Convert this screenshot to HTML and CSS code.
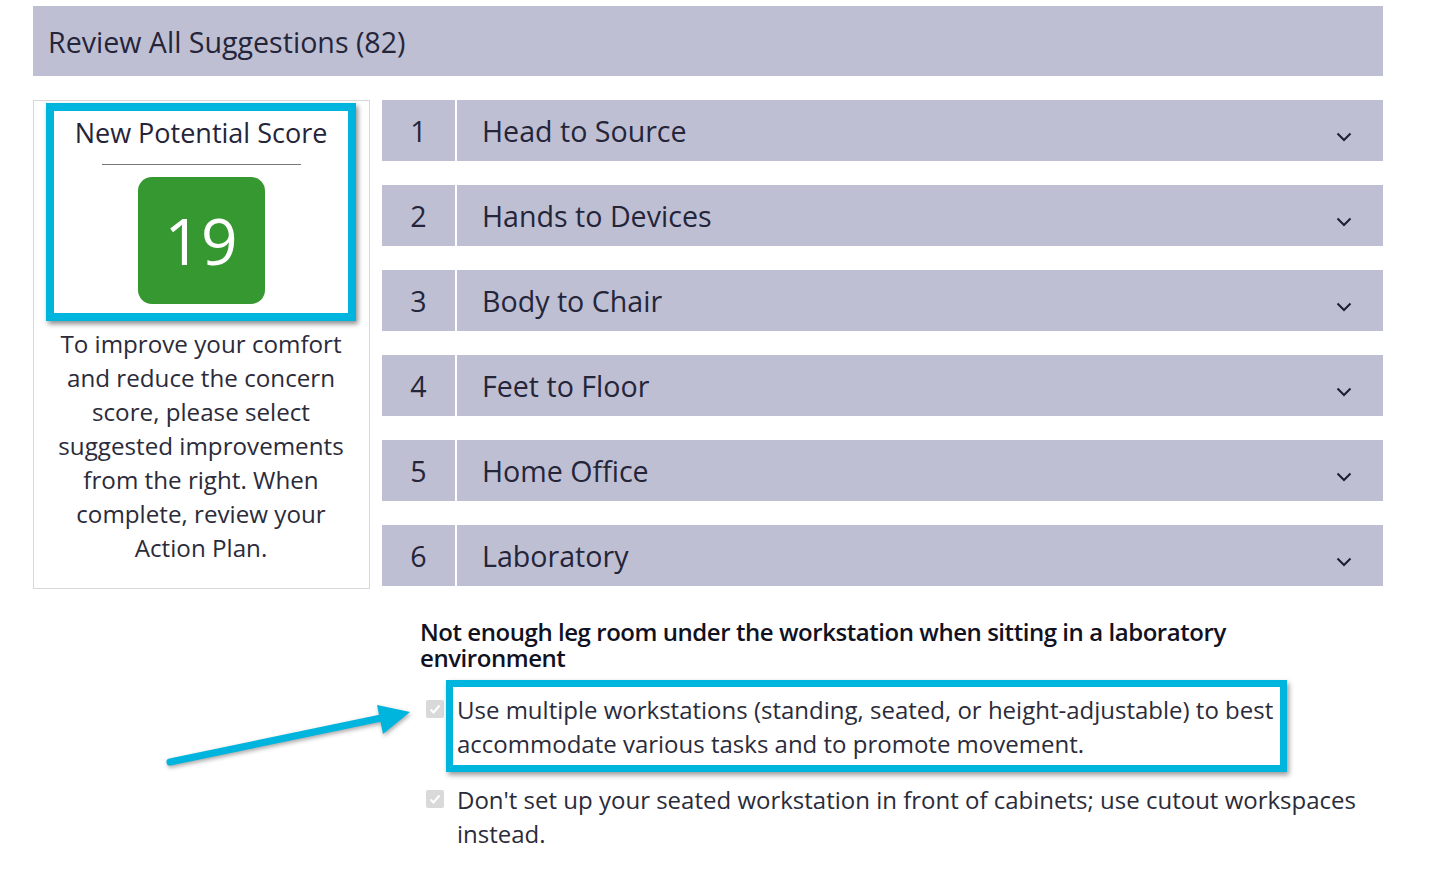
FILE: index.html
```html
<!DOCTYPE html>
<html lang="en">
<head>
	<meta charset="UTF-8">
	<title>Review All Suggestions</title>
	<link rel="stylesheet" href="styles.css">
</head>
<body>
	<div class="page">
		<div class="topbar">Review All Suggestions (82)</div>
		<div class="main">
			<div class="scorecard">
				<div class="scorebox">
					<div class="scoretitle">New Potential Score</div>
					<div class="divider"></div>
					<div class="score">19</div>
				</div>
				<p class="hint">To improve your comfort and reduce the concern score, please select suggested improvements from the right. When complete, review your Action Plan.</p>
			</div>
			<div class="right">
				<div class="acc">
					<div class="num">1</div>
					<div class="title">Head to Source</div>
					<svg class="chev" width="16" height="10" viewBox="0 0 16 10"><polyline points="1.5,1.5 8,8 14.5,1.5"/></svg>
				</div>
				<div class="acc">
					<div class="num">2</div>
					<div class="title">Hands to Devices</div>
					<svg class="chev" width="16" height="10" viewBox="0 0 16 10"><polyline points="1.5,1.5 8,8 14.5,1.5"/></svg>
				</div>
				<div class="acc">
					<div class="num">3</div>
					<div class="title">Body to Chair</div>
					<svg class="chev" width="16" height="10" viewBox="0 0 16 10"><polyline points="1.5,1.5 8,8 14.5,1.5"/></svg>
				</div>
				<div class="acc">
					<div class="num">4</div>
					<div class="title">Feet to Floor</div>
					<svg class="chev" width="16" height="10" viewBox="0 0 16 10"><polyline points="1.5,1.5 8,8 14.5,1.5"/></svg>
				</div>
				<div class="acc">
					<div class="num">5</div>
					<div class="title">Home Office</div>
					<svg class="chev" width="16" height="10" viewBox="0 0 16 10"><polyline points="1.5,1.5 8,8 14.5,1.5"/></svg>
				</div>
				<div class="acc">
					<div class="num">6</div>
					<div class="title">Laboratory</div>
					<svg class="chev" width="16" height="10" viewBox="0 0 16 10"><polyline points="1.5,1.5 8,8 14.5,1.5"/></svg>
				</div>

				<div class="issue">
					<h3>Not enough leg room under the workstation when sitting in a laboratory environment</h3>
					<div class="item">
						<span class="check"><svg width="18" height="18" viewBox="0 0 18 18"><polyline points="4.5,9.5 7.5,12.5 13.5,5.5"/></svg></span>
						<span class="itemtext">Use multiple workstations (standing, seated, or height-adjustable) to best accommodate various tasks and to promote movement.</span>
						<div class="mark"></div>
					</div>
					<div class="item">
						<span class="check"><svg width="18" height="18" viewBox="0 0 18 18"><polyline points="4.5,9.5 7.5,12.5 13.5,5.5"/></svg></span>
						<span class="itemtext">Don't set up your seated workstation in front of cabinets; use cutout workspaces instead.</span>
					</div>
				</div>
			</div>
		</div>
		<svg class="arrow" width="270" height="80" viewBox="0 0 270 80">
			<line x1="10" y1="67" x2="226" y2="22"/>
			<polygon points="250,17 217,10 223,39"/>
		</svg>
	</div>
</body>
</html>
```
FILE: styles.css
```css
*{
	box-sizing: border-box;
}
body{
	margin: 0;
	background: #fff;
	font-family: "Open Sans", "Liberation Sans", sans-serif;
	color: #25253a;
}
.page{
	position: relative;
	padding: 6px 0 0 33px;
	width: 1383px;
}
.topbar{
	height: 70px;
	background: #bebfd3;
	display: flex;
	align-items: center;
	padding-left: 15px;
	font-size: 28.6px;
}
.main{
	display: flex;
	margin-top: 24px;
	gap: 12px;
	align-items: flex-start;
}
.scorecard{
	width: 337px;
	flex: none;
	border: 1px solid #d8d8d8;
	padding: 2px 13px 23px 12px;
}
.scorebox{
	border: 8px solid #00b5dd;
	box-shadow: 2px 3px 5px rgba(0,0,0,0.45);
	display: flex;
	flex-direction: column;
	align-items: center;
	padding: 5px 0 9px;
}
.scoretitle{
	font-size: 27px;
	line-height: 34px;
}
.divider{
	width: 199px;
	height: 1px;
	background: #777;
	margin: 14px 0 12px;
}
.score{
	width: 127px;
	height: 127px;
	border-radius: 14px;
	background: #359830;
	color: #fff;
	font-size: 64px;
	display: flex;
	align-items: center;
	justify-content: center;
}
.hint{
	margin: 6px -4px 0;
	padding: 0;
	text-align: center;
	font-size: 24.2px;
	line-height: 34px;
	color: #2b2b3a;
}
.right{
	flex: 1;
}
.acc{
	height: 61px;
	background: #bebfd3;
	display: flex;
	align-items: center;
	margin-bottom: 24px;
	font-size: 28.6px;
}
.num{
	width: 75px;
	height: 100%;
	border-right: 2px solid #fff;
	display: flex;
	align-items: center;
	justify-content: center;
}
.title{
	flex: 1;
	padding-left: 25px;
}
.chev{
	margin: 12px 31px 0 0;
}
.chev polyline{
	fill: none;
	stroke: #1e1e30;
	stroke-width: 2;
}
.issue{
	padding: 9px 18px 0 38px;
}
.issue h3{
	margin: 0 0 22px;
	font-size: 24px;
	font-weight: 600;
	line-height: 26px;
	letter-spacing: -0.45px;
	color: #111122;
}
.item{
	position: relative;
	display: flex;
	align-items: flex-start;
	padding-left: 6px;
	gap: 13px;
	font-size: 24px;
	line-height: 34px;
	margin-bottom: 22px;
	color: #2b2b3a;
}
.check{
	flex: none;
	width: 18px;
	height: 18px;
	margin-top: 7px;
	background: #d9d9d9;
	border-radius: 2px;
}
.check svg{
	display: block;
}
.check polyline{
	fill: none;
	stroke: #fff;
	stroke-width: 2;
}
.mark{
	position: absolute;
	left: 26px;
	top: -13px;
	width: 841px;
	height: 92px;
	border: 7px solid #00b5dd;
	box-shadow: 2px 3px 5px rgba(0,0,0,0.4);
}
.arrow{
	position: absolute;
	left: 160px;
	top: 695px;
	filter: drop-shadow(1px 2px 2px rgba(0,0,0,0.35));
}
.arrow line{
	stroke: #00b5dd;
	stroke-width: 7;
	stroke-linecap: round;
}
.arrow polygon{
	fill: #00b5dd;
}
```
